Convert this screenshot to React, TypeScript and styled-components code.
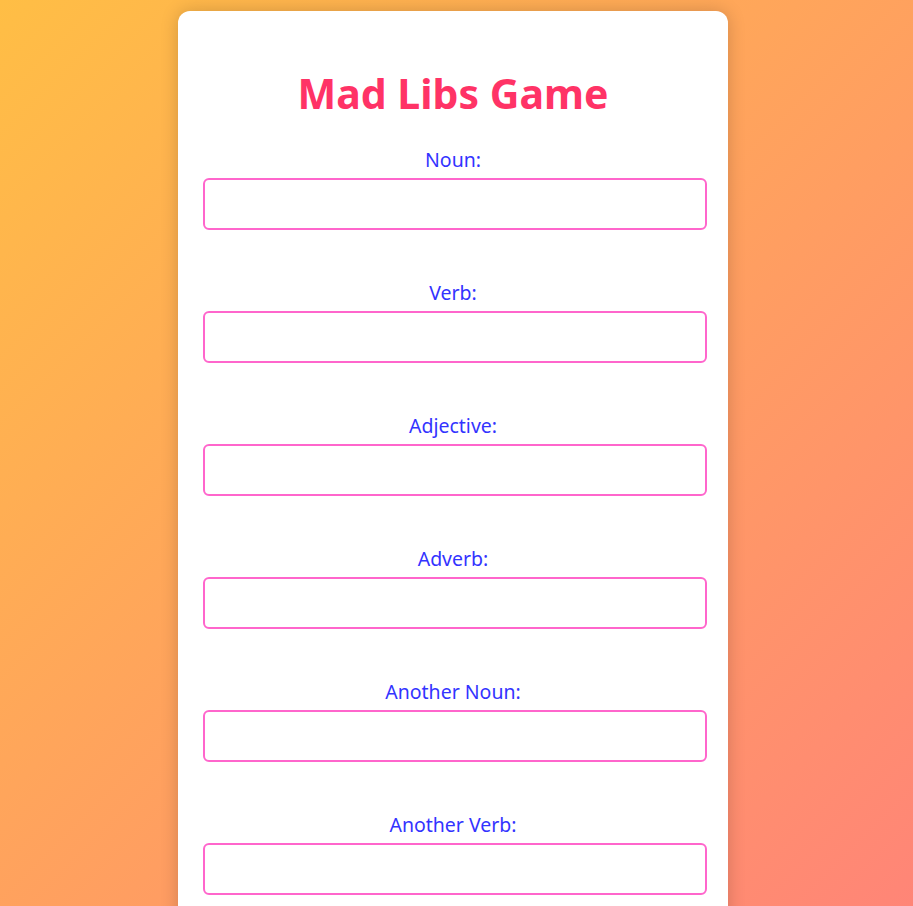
import React from "react";
import styled, { createGlobalStyle } from "styled-components";

const GlobalStyle = createGlobalStyle`
  html, body {
    margin: 0;
    padding: 0;
  }

  body {
    min-height: 100vh;
    background: linear-gradient(135deg, #ffbe45 0%, #ff8577 100%);
    background-attachment: fixed;
    font-family: "Comic Sans MS", "Noto Sans", "DejaVu Sans", sans-serif;
  }
`;

const fields = [
  "Noun",
  "Verb",
  "Adjective",
  "Adverb",
  "Another Noun",
  "Another Verb",
];

const App = () => {
  return (
    <>
      <GlobalStyle />
      <Page>
        <Card>
          <Title>Mad Libs Game</Title>
          {fields.map((name) => (
            <FieldGroup key={name}>
              <Label htmlFor={name}>{name}:</Label>
              <TextInput id={name} type="text" />
            </FieldGroup>
          ))}
        </Card>
      </Page>
    </>
  );
};

export default App;

const Page = styled.div`
  display: flex;
  justify-content: center;
  padding: 11px 7px 40px 0;
`;

const Card = styled.div`
  width: 500px;
  padding: 25px 25px 10px 25px;
  background-color: #ffffff;
  border-radius: 12px;
  box-shadow: 0 0 18px rgba(0, 0, 0, 0.18);
`;

const Title = styled.h1`
  margin: 29px 0 26px;
  font-size: 41px;
  line-height: 56px;
  font-weight: 700;
  color: #ff3366;
  text-align: center;
`;

const FieldGroup = styled.div`
  display: flex;
  flex-direction: column;
  align-items: stretch;
  margin-bottom: 50px;
`;

const Label = styled.label`
  display: block;
  margin-bottom: 5px;
  font-size: 19.5px;
  line-height: 26px;
  color: #3333ff;
  text-align: center;
`;

const TextInput = styled.input`
  box-sizing: content-box;
  width: 100%;
  height: 24px;
  padding: 12px 0;
  border: 2px solid #ff66cc;
  border-radius: 6px;
  background: #ffffff;
  font-family: inherit;
  font-size: 16px;
  outline: none;
`;
